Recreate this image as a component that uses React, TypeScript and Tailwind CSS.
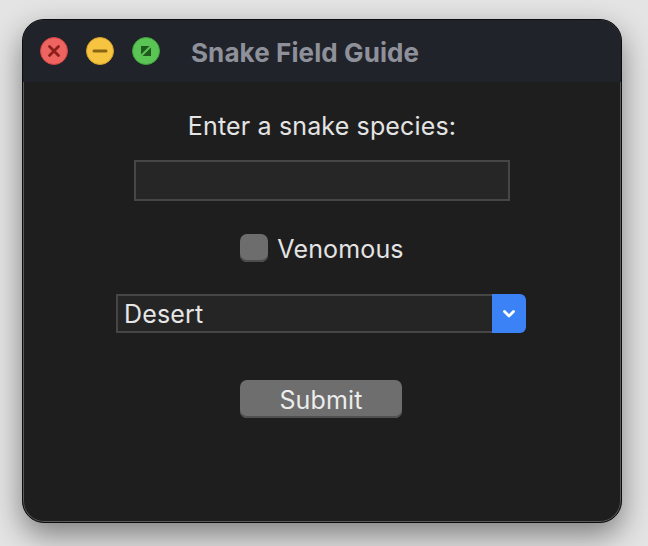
import { useState } from "react";

function TrafficLights() {
  return (
    <div className="flex items-center gap-[18px]">
      <span className="flex h-[28px] w-[28px] items-center justify-center rounded-full border border-[#d0443f] bg-[#ee6460]">
        <svg width="14" height="14" viewBox="0 0 14 14">
          <path d="M2.5 2.5 L11.5 11.5 M11.5 2.5 L2.5 11.5" stroke="#8c1f1c" strokeWidth="2.8" strokeLinecap="round" />
        </svg>
      </span>
      <span className="flex h-[28px] w-[28px] items-center justify-center rounded-full border border-[#d6a22a] bg-[#f6c440]">
        <svg width="16" height="6" viewBox="0 0 16 6">
          <path d="M2 3 L14 3" stroke="#8a6512" strokeWidth="3" strokeLinecap="round" />
        </svg>
      </span>
      <span className="flex h-[28px] w-[28px] items-center justify-center rounded-full border border-[#3ea23a] bg-[#5ac455]">
        <svg width="14" height="14" viewBox="0 0 14 14">
          <path d="M2 2 L10.5 2 L2 10.5 Z" fill="#1e5a1c" />
          <path d="M12 3.5 L12 12 L3.5 12 Z" fill="#1e5a1c" />
        </svg>
      </span>
    </div>
  );
}

export default function App() {
  const [name, setName] = useState("");
  const [venomous, setVenomous] = useState(false);
  const [habitat, setHabitat] = useState("Desert");

  return (
    <div
      className="h-[546px] w-[648px] bg-[#e4e4e4] pl-[22px] pt-[19px]"
      style={{ fontFamily: "Inter, 'Noto Sans', sans-serif" }}
    >
      <div className="flex h-[504px] w-[600px] flex-col overflow-hidden rounded-[22px] border border-[#0c0c0c] bg-[#1e1e1e] shadow-[0_12px_30px_rgba(0,0,0,0.45),inset_0_0_0_1px_#5a5a5a]">
        <header className="flex h-[62px] shrink-0 items-center bg-[#21232b] pl-[17px]">
          <TrafficLights />
          <h1 className="ml-[31px] mt-[2px] text-[26px] font-bold tracking-[0.1px] text-[#8f919a]">
            Snake Field Guide
          </h1>
        </header>

        <main className="flex flex-col items-center text-[25px] tracking-[0.15px]">
          <label className="mt-[30px] leading-[28px] text-[#e4e4e4]">
            Enter a snake species:
          </label>
          <input
            value={name}
            onChange={(e) => setName(e.target.value)}
            className="mt-[20px] h-[41px] w-[376px] border-2 border-[#464646] bg-[#262626] px-2 text-[22px] text-[#e4e4e4] outline-none"
          />

          <label className="mt-[33px] flex h-[28px] items-center gap-[9px]">
            <button
              type="button"
              onClick={() => setVenomous(!venomous)}
              className="h-[28px] w-[28px] rounded-[7px] bg-[#6d6d6d] shadow-[inset_0_-2px_0_#4c4c4c]"
            />
            <span className="pt-[3px] text-[#e4e4e4]">Venomous</span>
          </label>

          <div className="ml-[-2px] mt-[32px] flex h-[39px] w-[410px]">
            <div className="flex flex-1 items-center border-2 border-r-0 border-[#464646] bg-[#252525] pl-[6px] pt-[3px] text-[#e6e6e6]">
              {habitat}
            </div>
            <button
              type="button"
              onClick={() => setHabitat(habitat === "Desert" ? "Forest" : "Desert")}
              className="flex w-[34px] items-center justify-center rounded-r-[6px] bg-[#3b82f6]"
            >
              <svg width="16" height="12" viewBox="0 0 16 12">
                <path d="M3.5 3.5 L8 8 L12.5 3.5" stroke="#ffffff" strokeWidth="2.8" fill="none" strokeLinecap="round" strokeLinejoin="round" />
              </svg>
            </button>
          </div>

          <button
            type="button"
            className="ml-[-2px] mt-[47px] h-[38px] w-[162px] rounded-[7px] bg-[#6e6e6e] pt-[2px] text-[#ececec] shadow-[inset_0_-2px_0_#505050]"
          >
            Submit
          </button>
        </main>
      </div>
    </div>
  );
}
